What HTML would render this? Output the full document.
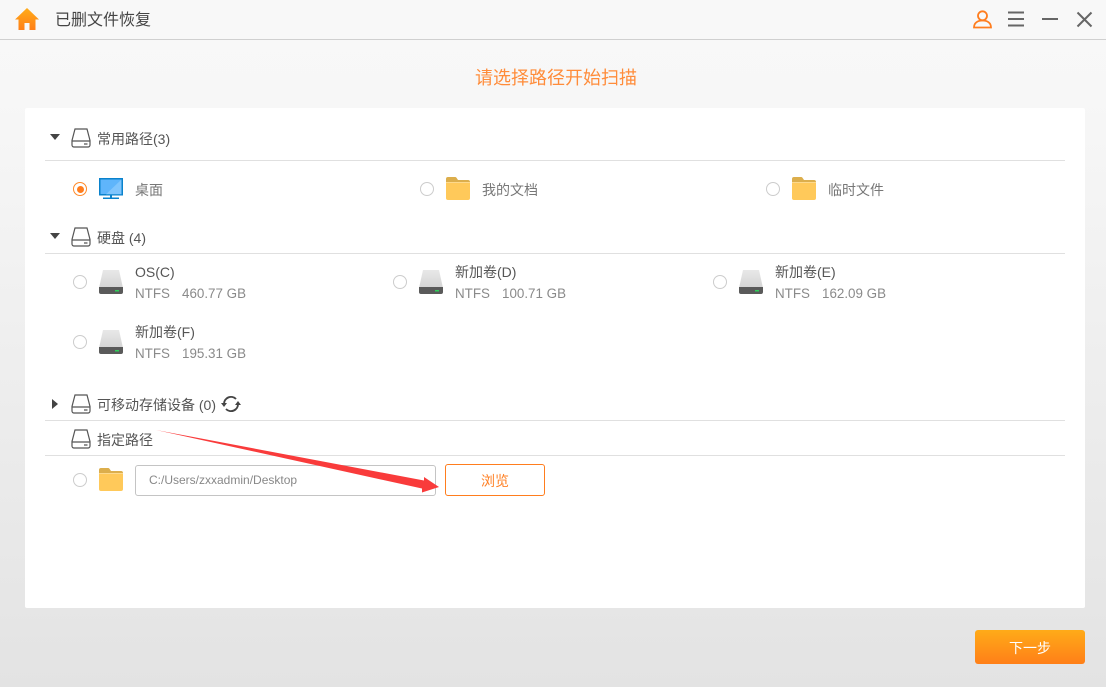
<!DOCTYPE html>
<html lang="zh-CN"><head><meta charset="utf-8"><title>已删文件恢复</title>
<style>
html,body{margin:0;padding:0}
body{width:1106px;height:687px;position:relative;overflow:hidden;background:linear-gradient(#f8f8f8 0,#f7f7f7 100px,#e3e3e3 687px);font-family:"Liberation Sans","WenQuanYi Zen Hei","Noto Sans CJK SC",sans-serif;color:#555}
.a{position:absolute;white-space:nowrap}
.t{font-size:14px;line-height:20px;color:#555}
.s{font-size:13.400px;line-height:18px;color:#8a8a8a}
.g{font-size:14px;line-height:20px;color:#777}
.l{position:absolute;height:1px;background:#e0e0e0;left:45px;width:1020px}
.r{position:absolute;width:12px;height:12px;border:1px solid #ccc;border-radius:50%;background:#fff}
svg{position:absolute;overflow:visible}
</style></head><body>
<svg style="left:0;top:0" width="0" height="0"><defs>
<linearGradient id="o" x1="0" y1="0" x2="0" y2="1"><stop offset="0" stop-color="#ffac1a"/><stop offset="1" stop-color="#ff7f17"/></linearGradient>
<linearGradient id="d" x1="0" y1="0" x2="0" y2="1"><stop offset="0" stop-color="#e8e8e8"/><stop offset="1" stop-color="#d4d4d4"/></linearGradient>
<symbol id="hd" viewBox="0 0 20 20"><path d="M4 1h12l3 11.500v4.500a2 2 0 0 1-2 2H3a2 2 0 0 1-2-2v-4.500zM1 13h18M13 16h3.500" fill="none" stroke="#555" stroke-width="1.200"/></symbol>
<symbol id="dr" viewBox="0 0 24 26"><path d="M4 1h16l4 18H0z" fill="url(#d)"/><path d="M0 18h24v5a2 2 0 0 1-2 2H2a2 2 0 0 1-2-2z" fill="#5a5a5a"/><rect x="16" y="21" width="4" height="1.500" fill="#2fd05a"/></symbol>
<symbol id="fo" viewBox="0 0 24 23"><path d="M0 2a2 2 0 0 1 2-2h7a2 2 0 0 1 1.500.700L12 3h10a2 2 0 0 1 2 2v4H0z" fill="#dcae4c"/><path d="M0 5h24v16a2 2 0 0 1-2 2H2a2 2 0 0 1-2-2z" fill="#ffc95a"/><path d="M0 5h24v1H0z" fill="#fdd98c"/></symbol>
</defs></svg>

<svg style="left:15px;top:8px" width="24" height="22" viewBox="0 0 24 22"><path d="M12 0L24 11.500H20.500V22H14.500V15H9.500V22H3.500V11.500H0z" fill="url(#o)"/></svg>
<div class="a" style="left:55px;top:10px;font-size:16px;line-height:22px;color:#444">已删文件恢复</div>
<svg style="left:973px;top:10px" width="19" height="19" viewBox="0 0 19 19" fill="none" stroke="#ff7d1e" stroke-width="1.800"><circle cx="9.500" cy="5.800" r="4.500"/><path d="M1 17.500c0-4.500 3.500-7 8.500-7s8.500 2.500 8.500 7z"/></svg>
<svg style="left:1008px;top:11px" width="17" height="15" viewBox="0 0 17 15" fill="none" stroke="#666" stroke-width="2"><path d="M0 1.500h16M0 8h16M0 14.500h16"/></svg>
<svg style="left:1042px;top:18px" width="17" height="3" viewBox="0 0 17 3" fill="none" stroke="#666" stroke-width="2"><path d="M0 1h16"/></svg>
<svg style="left:1077px;top:12px" width="15" height="15" viewBox="0 0 15 15" fill="none" stroke="#666" stroke-width="2"><path d="M.500.500l14 14M14.500.500l-14 14"/></svg>
<div class="a" style="left:0;top:39px;width:1106px;height:1px;background:#d0d0d0"></div>
<div class="a" style="left:475px;top:66px;font-size:18px;line-height:24px;color:#ff8c3a">请选择路径开始扫描</div>

<div class="a" style="left:25px;top:108px;width:1060px;height:500px;background:#fff;border-radius:2px"></div>

<svg style="left:50px;top:134px" width="10" height="6"><path d="M0 0h10L5 6z" fill="#444"/></svg>
<svg style="left:71px;top:128px" width="20" height="20"><use href="#hd" width="20" height="20"/></svg>
<div class="a t" style="left:97px;top:129px">常用路径(3)</div>
<div class="l" style="top:160px"></div>
<div class="r" style="left:73px;top:182px;border-color:#ff8a2a"></div>
<div class="a" style="left:76.500px;top:185.500px;width:7px;height:7px;border-radius:50%;background:#ff7d1e"></div>
<svg style="left:99px;top:178px" width="24" height="21" viewBox="0 0 24 21"><rect x=".750" y=".750" width="22.500" height="16" fill="#5fb5fb" stroke="#0a82cc" stroke-width="1.500"/><path d="M7 16.200L22.500 1.500V16.200z" fill="#80c5fd"/><path d="M11 17h2v2.500h-2zM4 19.500h16v1.500H4z" fill="#0a82cc"/></svg>
<div class="a g" style="left:135px;top:180px">桌面</div>
<div class="r" style="left:420px;top:182px"></div>
<svg style="left:446px;top:177px" width="24" height="23"><use href="#fo" width="24" height="23"/></svg>
<div class="a g" style="left:482px;top:180px">我的文档</div>
<div class="r" style="left:766px;top:182px"></div>
<svg style="left:792px;top:177px" width="24" height="23"><use href="#fo" width="24" height="23"/></svg>
<div class="a g" style="left:828px;top:180px">临时文件</div>

<svg style="left:50px;top:233px" width="10" height="6"><path d="M0 0h10L5 6z" fill="#444"/></svg>
<svg style="left:71px;top:227px" width="20" height="20"><use href="#hd" width="20" height="20"/></svg>
<div class="a t" style="left:97px;top:228px">硬盘 (4)</div>
<div class="l" style="top:253px"></div>

<div class="r" style="left:73px;top:275px"></div>
<svg style="left:99px;top:269px" width="24" height="26"><use href="#dr" width="24" height="26"/></svg>
<div class="a t" style="left:135px;top:262px">OS(C)</div>
<div class="a s" style="left:135px;top:285px">NTFS</div><div class="a s" style="left:182px;top:285px">460.77 GB</div>

<div class="r" style="left:393px;top:275px"></div>
<svg style="left:419px;top:269px" width="24" height="26"><use href="#dr" width="24" height="26"/></svg>
<div class="a t" style="left:455px;top:262px">新加卷(D)</div>
<div class="a s" style="left:455px;top:285px">NTFS</div><div class="a s" style="left:502px;top:285px">100.71 GB</div>

<div class="r" style="left:713px;top:275px"></div>
<svg style="left:739px;top:269px" width="24" height="26"><use href="#dr" width="24" height="26"/></svg>
<div class="a t" style="left:775px;top:262px">新加卷(E)</div>
<div class="a s" style="left:775px;top:285px">NTFS</div><div class="a s" style="left:822px;top:285px">162.09 GB</div>

<div class="r" style="left:73px;top:335px"></div>
<svg style="left:99px;top:329px" width="24" height="26"><use href="#dr" width="24" height="26"/></svg>
<div class="a t" style="left:135px;top:322px">新加卷(F)</div>
<div class="a s" style="left:135px;top:345px">NTFS</div><div class="a s" style="left:182px;top:345px">195.31 GB</div>

<svg style="left:52px;top:399px" width="6" height="10"><path d="M0 0v10l6-5z" fill="#444"/></svg>
<svg style="left:71px;top:394px" width="20" height="20"><use href="#hd" width="20" height="20"/></svg>
<div class="a t" style="left:97px;top:395px">可移动存储设备 (0)</div>
<svg style="left:221px;top:395px" width="20" height="18" viewBox="0 0 20 18" fill="none" stroke="#444" stroke-width="1.900"><path d="M3 9a7 7 0 0 1 12-5M17 9a7 7 0 0 1-12 5"/><path d="M0 8h6L3 12zM14 10h6l-3-4z" fill="#444" stroke="none"/></svg>
<div class="l" style="top:420px"></div>

<svg style="left:71px;top:429px" width="20" height="20"><use href="#hd" width="20" height="20"/></svg>
<div class="a t" style="left:97px;top:430px">指定路径</div>
<div class="l" style="top:455px"></div>
<div class="r" style="left:73px;top:473px"></div>
<svg style="left:99px;top:468px" width="24" height="23"><use href="#fo" width="24" height="23"/></svg>
<div class="a" style="left:135px;top:465px;width:299px;height:29px;border:1px solid #c4c4c4;border-radius:3px;background:#fff"></div>
<div class="a" style="left:149px;top:472px;font-size:12px;line-height:17px;color:#888">C:/Users/zxxadmin/Desktop</div>
<div class="a" style="left:445px;top:464px;width:98px;height:30px;border:1px solid #ff7d1e;border-radius:3px;background:#fff;text-align:center;font-size:14px;line-height:32px;color:#ff8126">浏览</div>
<svg style="left:0;top:0" width="1106" height="687"><path d="M156 430L424 480.500L424 477L439 487L422 492.500L422 488.500z" fill="#f93b3b"/></svg>

<div class="a" style="left:975px;top:630px;width:110px;height:34px;border-radius:3px;background:linear-gradient(#ffab18,#ff7f18);text-align:center;font-size:14px;line-height:36px;color:#fff">下一步</div>
</body></html>
